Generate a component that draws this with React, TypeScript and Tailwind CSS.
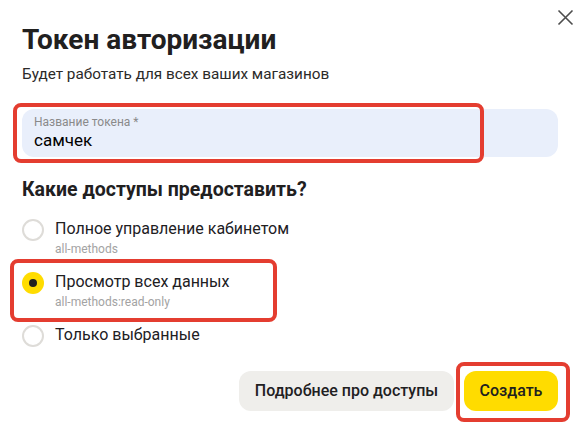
import React, { useState } from "react"

const options = [
  { id: "all", title: "Полное управление кабинетом", sub: "all-methods" },
  { id: "read", title: "Просмотр всех данных", sub: "all-methods:read-only" },
  { id: "selected", title: "Только выбранные", sub: "" },
]

const Radio = ({ checked }: { checked: boolean }) =>
  checked ? (
    <span className="flex h-[22px] w-[22px] shrink-0 items-center justify-center rounded-full bg-[#ffdc00]">
      <span className="h-[8px] w-[8px] rounded-full bg-[#21201f]" />
    </span>
  ) : (
    <span className="h-[22px] w-[22px] shrink-0 rounded-full border-2 border-[#dedcd8] bg-white" />
  )

export default function App() {
  const [name, setName] = useState("самчек")
  const [access, setAccess] = useState("read")

  return (
    <div
      className="relative h-[437px] w-[584px] overflow-hidden bg-white pl-[22px] pr-[26px] text-[#21201f]"
      style={{ fontFamily: "Roboto, 'Open Sans', sans-serif" }}
    >
      <button className="absolute right-[9px] top-[8px] p-[1px] text-[#4d4d4d]">
        <svg width="17" height="17" viewBox="0 0 17 17" fill="none">
          <path d="M1.5 1.5l14 14M15.5 1.5l-14 14" stroke="currentColor" strokeWidth="1.6" />
        </svg>
      </button>

      <h1 className="pt-[24px] text-[28px] font-bold leading-[32px]">Токен авторизации</h1>
      <p className="mt-[8px] text-[15.3px] leading-[20px] text-[#2b2a29]">
        Будет работать для всех ваших магазинов
      </p>

      <div className="relative mt-[25px] h-[48px] w-[536px] rounded-[12px] bg-[#e9effb] px-[12px] pt-[6px]">
        <div className="text-[12px] leading-[14px] text-[#8a8a8a]">Название токена *</div>
        <input
          className="w-full bg-transparent text-[17px] leading-[22px] text-black outline-none"
          value={name}
          onChange={(e) => setName(e.target.value)}
        />
        <div className="pointer-events-none absolute left-[-9px] top-[-6px] h-[60px] w-[471px] rounded-[8px] border-4 border-[#e43d30]" />
      </div>

      <h2 className="mt-[21px] text-[19.5px] font-bold leading-[24px]">Какие доступы предоставить?</h2>

      <div className="mt-[17px] flex flex-col gap-[15px]">
        {options.map((o) => (
          <label key={o.id} className="relative flex cursor-pointer items-start gap-[11px]" onClick={() => setAccess(o.id)}>
            <Radio checked={access === o.id} />
            <div className="flex flex-col">
              <span className="text-[16px] leading-[20px]">{o.title}</span>
              {o.sub && <span className="mt-[2px] text-[12px] leading-[16px] text-[#a3a3a3]">{o.sub}</span>}
            </div>
            {o.id === "read" && (
              <div className="pointer-events-none absolute left-[-12px] top-[-13px] h-[63px] w-[267px] rounded-[8px] border-4 border-[#e43d30]" />
            )}
          </label>
        ))}
      </div>

      <div className="mt-[24px] flex justify-end gap-[10px]">
        <button className="h-[40px] w-[215px] rounded-[12px] bg-[#efeeeb] text-[16px] font-medium text-[#21201f]">
          Подробнее про доступы
        </button>
        <div className="relative">
          <button className="h-[40px] w-[94px] rounded-[12px] bg-[#ffdc00] text-[16px] font-medium text-[#21201f]">
            Создать
          </button>
          <div className="pointer-events-none absolute left-[-8px] top-[-9px] h-[60px] w-[114px] rounded-[8px] border-4 border-[#e43d30]" />
        </div>
      </div>
    </div>
  )
}
